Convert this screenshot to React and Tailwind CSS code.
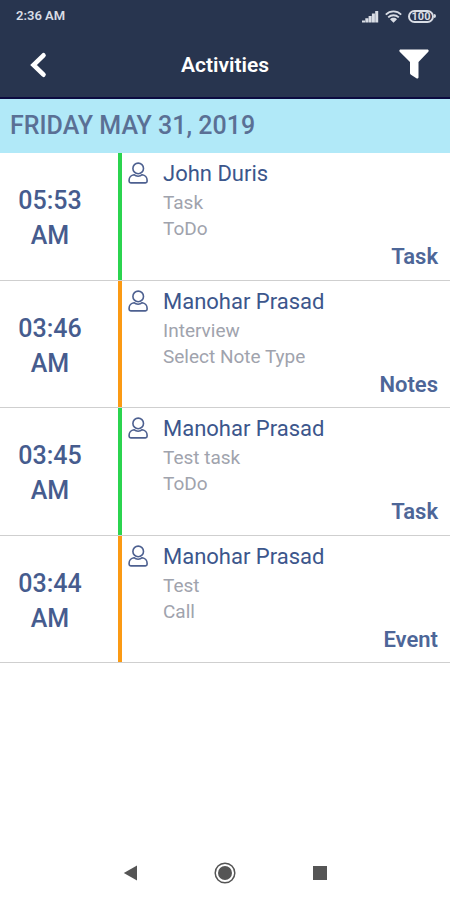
import React from "react";

const activities = [
  { time: "05:53", name: "John Duris", lines: ["Task", "ToDo"], kind: "Task", bar: "bg-[#2bd44f]" },
  { time: "03:46", name: "Manohar Prasad", lines: ["Interview", "Select Note Type"], kind: "Notes", bar: "bg-[#fb9a14]" },
  { time: "03:45", name: "Manohar Prasad", lines: ["Test task", "ToDo"], kind: "Task", bar: "bg-[#2bd44f]" },
  { time: "03:44", name: "Manohar Prasad", lines: ["Test", "Call"], kind: "Event", bar: "bg-[#fb9a14]" },
];

function StatusBar() {
  return (
    <div className="flex h-8 items-center justify-between pl-4 pr-3.5 text-[#d9dde5]">
      <span className="text-[13px] font-semibold">2:36 AM</span>
      <div className="flex items-center gap-1.5">
        <svg width="17" height="13" viewBox="0 0 17 13" fill="currentColor" aria-hidden="true">
          <path d="M0 10.500h3V12.500H0zM3.300 8.300h3v4.200h-3zM6.600 6h3v6.500h-3zM9.900 3.500h3v9h-3zM13.200 1h3v11.500h-3z" />
        </svg>
        <svg width="17" height="13" viewBox="0 0 17 13" fill="none" stroke="currentColor" strokeWidth="1.800" aria-hidden="true">
          <path d="M.8 4.600C5.200.4 11.800.4 16.200 4.600M3.200 7.400c3.100-2.900 7.500-2.900 10.600 0" />
          <path d="M5 9.200c2-1.900 5-1.900 7 0L8.500 12.800z" fill="currentColor" stroke="none" />
        </svg>
        <div className="flex items-center">
          <span className="flex h-[13px] w-[26px] items-center justify-center rounded-full border-2 border-current text-[11px] font-bold leading-none">
            100
          </span>
          <span className="h-1 w-0.5 rounded-r bg-current" />
        </div>
      </div>
    </div>
  );
}

function Header() {
  return (
    <header className="border-b-2 border-[#0c0b40] bg-[#28354f]">
      <StatusBar />
      <div className="grid h-[65px] grid-cols-[1fr_auto_1fr] items-center px-5">
        <button type="button" aria-label="Back" className="flex h-9 w-9 items-center justify-center justify-self-start text-white">
          <svg width="18" height="28" viewBox="0 0 18 28" fill="none" stroke="currentColor" strokeWidth="4.600" strokeLinecap="round" aria-hidden="true">
            <path d="M14.500 4.300L4.500 14l10 9.700" />
          </svg>
        </button>
        <h1 className="pt-0.5 text-[21px] font-semibold text-white">Activities</h1>
        <button type="button" aria-label="Filter" className="flex h-9 w-8 items-center justify-center justify-self-end text-white">
          <svg width="30" height="32" viewBox="0 0 30 32" fill="currentColor" aria-hidden="true">
            <path d="M1.600.500h26.800c1.200 0 1.700 1.400.9 2.200L19.500 13v15.200c0 1.200-1.200 1.700-2.100 1.100l-5.800-3.900c-.4-.3-.6-.7-.6-1.100V13L.7 2.700C-.1 1.900.4.500 1.600.500z" />
          </svg>
        </button>
      </div>
    </header>
  );
}

function PersonIcon() {
  return (
    <svg width="20" height="22" viewBox="0 0 20 22" fill="none" stroke="currentColor" strokeWidth="1.600" strokeLinejoin="round" aria-hidden="true">
      <circle cx="10.200" cy="6.400" r="5.300" />
      <path d="M6 12.700C3.200 13 1.100 15.400 1.100 18.300v1c0 .9.700 1.600 1.700 1.600h14.600c1 0 1.700-.7 1.700-1.600v-1c0-2.900-2.100-5.300-4.900-5.600-2.300 2-5.900 2-8.200 0z" />
    </svg>
  );
}

function ActivityRow({ item }) {
  return (
    <li className="flex border-b border-[#cfcfcf]">
      <div className="flex w-[118px] shrink-0 items-center justify-center pr-[18px] pt-1">
        <time className="flex flex-col text-center text-[25px] font-medium leading-[35px] text-[#465c8e]">
          <span>{item.time}</span>
          <span>AM</span>
        </time>
      </div>
      <div className={`w-1 shrink-0 ${item.bar}`} />
      <div className="flex grow flex-col pb-2 pl-1.5 pr-3 pt-[5px]">
        <div className="flex gap-[15px]">
          <span className="mt-1 text-[#4d6090]">
            <PersonIcon />
          </span>
          <div>
            <h3 className="text-[22px] leading-8 text-[#3c568c]">{item.name}</h3>
            {item.lines.map((line) => (
              <p key={line} className="text-[19px] leading-[26px] text-[#a0a3ad]">
                {line}
              </p>
            ))}
          </div>
        </div>
        <p className="mt-px text-right text-[22px] font-semibold leading-7 text-[#4d6698]">{item.kind}</p>
      </div>
    </li>
  );
}

function NavBar() {
  return (
    <nav className="flex h-[54px] items-center justify-center gap-[74px] text-[#555555]">
      <button type="button" aria-label="Back" className="flex w-5 justify-center">
        <svg width="14" height="16" viewBox="0 0 14 16" fill="currentColor" aria-hidden="true">
          <path d="M14 .5v15L.8 8z" />
        </svg>
      </button>
      <button type="button" aria-label="Home" className="flex w-[22px] justify-center">
        <svg width="22" height="22" viewBox="0 0 22 22" aria-hidden="true">
          <circle cx="11" cy="11" r="9.800" fill="none" stroke="currentColor" strokeWidth="1.500" />
          <circle cx="11" cy="11" r="7" fill="currentColor" />
        </svg>
      </button>
      <button type="button" aria-label="Recent apps" className="flex w-5 justify-center">
        <svg width="14" height="14" viewBox="0 0 14 14" fill="currentColor" aria-hidden="true">
          <path d="M0 0h14v14H0z" />
        </svg>
      </button>
    </nav>
  );
}

export default function App() {
  return (
    <div className="flex min-h-screen flex-col bg-white font-['Roboto',sans-serif]">
      <Header />
      <main className="grow">
        <h2 className="bg-[#b1e9f8] px-2.5 py-2.5 text-[25px] font-medium leading-[34px] text-[#5a7095]">
          FRIDAY MAY 31, 2019
        </h2>
        <ul className="grid min-h-[510px] auto-rows-fr">
          {activities.map((item) => (
            <ActivityRow key={item.time} item={item} />
          ))}
        </ul>
      </main>
      <NavBar />
    </div>
  );
}
